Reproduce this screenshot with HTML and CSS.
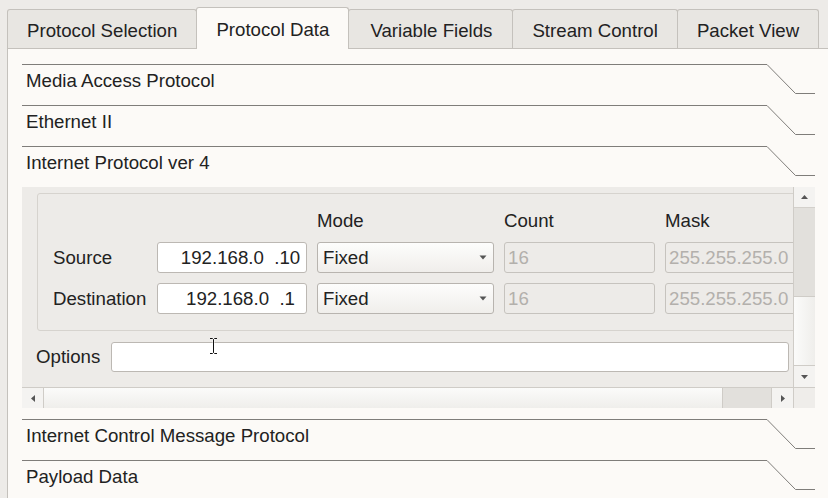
FILE: index.html
```html
<!DOCTYPE html>
<html>
<head>
<meta charset="utf-8">
<link rel="stylesheet" href="styles.css">
</head>
<body>
<div class="tabs">
  <div class="tab">Protocol Selection</div>
  <div class="tab active">Protocol Data</div>
  <div class="tab tab-wide">Variable Fields</div>
  <div class="tab">Stream Control</div>
  <div class="tab">Packet View</div>
</div>
<div class="panel">
  <div class="head">
    <div class="head-title">Media Access Protocol</div>
    <svg class="head-tail" width="48" height="41" viewBox="0 0 48 41"><polyline points="0,0.5 28.5,29.5 48,29.5" fill="none" stroke="#7f7d7a" stroke-width="1"/></svg>
  </div>
  <div class="head">
    <div class="head-title">Ethernet II</div>
    <svg class="head-tail" width="48" height="41" viewBox="0 0 48 41"><polyline points="0,0.5 28.5,29.5 48,29.5" fill="none" stroke="#7f7d7a" stroke-width="1"/></svg>
  </div>
  <div class="head">
    <div class="head-title">Internet Protocol ver 4</div>
    <svg class="head-tail" width="48" height="41" viewBox="0 0 48 41"><polyline points="0,0.5 28.5,29.5 48,29.5" fill="none" stroke="#7f7d7a" stroke-width="1"/></svg>
  </div>
  <div class="body">
    <div class="viewport">
      <div class="group">
        <div></div>
        <div></div>
        <div class="colhead">Mode</div>
        <div class="colhead">Count</div>
        <div class="colhead">Mask</div>

        <div class="label">Source</div>
        <div class="field ip">192.168.0  .10</div>
        <div class="field combo"><span>Fixed</span><svg width="8" height="5" viewBox="0 0 8 5"><polygon points="0.5,0.5 7.5,0.5 4,4.5" fill="#555"/></svg></div>
        <div class="field dis">16</div>
        <div class="field dis">255.255.255.0</div>

        <div class="label">Destination</div>
        <div class="field ip">192.168.0  .1</div>
        <div class="field combo"><span>Fixed</span><svg width="8" height="5" viewBox="0 0 8 5"><polygon points="0.5,0.5 7.5,0.5 4,4.5" fill="#555"/></svg></div>
        <div class="field dis">16</div>
        <div class="field dis">255.255.255.0</div>
      </div>
      <div class="opts">
        <div class="opts-label">Options</div>
        <div class="field opts-input"></div>
      </div>
    </div>
    <div class="vscroll">
      <div class="sb-btn sb-up"><svg width="7" height="4" viewBox="0 0 7 4"><polygon points="0,4 7,4 3.5,0" fill="#555"/></svg></div>
      <div class="sb-track"></div>
      <div class="sb-thumb-v"></div>
      <div class="sb-btn sb-down"><svg width="7" height="4" viewBox="0 0 7 4"><polygon points="0,0 7,0 3.5,4" fill="#555"/></svg></div>
    </div>
    <div class="hscroll">
      <div class="sb-btn sb-left"><svg width="4" height="7" viewBox="0 0 4 7"><polygon points="4,0 4,7 0,3.5" fill="#555"/></svg></div>
      <div class="sb-thumb-h"></div>
      <div class="sb-track-h"></div>
      <div class="sb-btn sb-right"><svg width="4" height="7" viewBox="0 0 4 7"><polygon points="0,0 0,7 4,3.5" fill="#555"/></svg></div>
    </div>
    <div class="corner"></div>
  </div>
  <div class="head">
    <div class="head-title">Internet Control Message Protocol</div>
    <svg class="head-tail" width="48" height="41" viewBox="0 0 48 41"><polyline points="0,0.5 28.5,29.5 48,29.5" fill="none" stroke="#7f7d7a" stroke-width="1"/></svg>
  </div>
  <div class="head">
    <div class="head-title">Payload Data</div>
    <svg class="head-tail" width="48" height="41" viewBox="0 0 48 41"><polyline points="0,0.5 28.5,29.5 48,29.5" fill="none" stroke="#7f7d7a" stroke-width="1"/></svg>
  </div>
</div>
<svg class="cursor" width="10" height="17" viewBox="0 0 10 17"><path d="M1 0.5h2.5l1 1 1-1H8M4.5 1.5v13M1 15.5h2.5l1-1 1 1H8" fill="none" stroke="#fff" stroke-width="2.2" opacity="0.7"/><path d="M1 0.5h2.5l1 1 1-1H8M4.5 1.5v13M1 15.5h2.5l1-1 1 1H8" fill="none" stroke="#111" stroke-width="1"/></svg>
</body>
</html>
```

FILE: styles.css
```css
html, body {
  margin: 0;
  padding: 0;
}

body {
  background: #edebe8;
  font-family: "Liberation Sans", Arial, sans-serif;
  font-size: 14pt;
  color: #222;
  height: 498px;
  overflow: hidden;
  position: relative;
}

.tabs {
  display: flex;
  align-items: flex-end;
  height: 41px;
  padding: 7px 0 0 7px;
}

.tab {
  box-sizing: border-box;
  height: 39px;
  padding: 4px 19px 0;
  border: 1px solid #c4c1bc;
  border-bottom: 0;
  border-radius: 3px 3px 0 0;
  background: #e8e6e2;
  display: flex;
  align-items: center;
  white-space: nowrap;
}

.tab + .tab {
  margin-left: -1px;
}

.tab.active {
  height: 42px;
  margin-bottom: -1px;
  padding-top: 3px;
  background: #fcfaf7;
  position: relative;
  z-index: 1;
}

.tab-wide {
  padding: 4px 20px 0 21px;
}

.panel {
  box-sizing: border-box;
  margin-left: 7px;
  border-left: 1px solid #c4c1bc;
  border-top: 1px solid #c4c1bc;
  background: #fcfaf7;
  padding: 15px 13px 0 14px;
  height: 450px;
  overflow: hidden;
}

.head {
  display: grid;
  grid-template-columns: 1fr 48px;
  height: 41px;
}

.head-title {
  border-top: 1px solid #7f7d7a;
  padding: 5px 0 0 4px;
  white-space: nowrap;
}

.head-tail {
  display: block;
}

.body {
  display: grid;
  grid-template-columns: 1fr 22px;
  grid-template-rows: 200px 21px;
  background: #edebe8;
  margin-bottom: 11px;
}

.viewport {
  grid-column: 1;
  grid-row: 1;
  overflow: hidden;
  padding-top: 6px;
}

.group {
  width: 795px;
  box-sizing: border-box;
  margin-left: 15px;
  border: 1px solid #d6d3ce;
  border-radius: 3px;
  padding: 16px 15px;
  display: grid;
  grid-template-columns: 94px 150px 177px 151px 151px;
  grid-template-rows: 22px 31px 31px;
  gap: 10px;
  align-items: center;
}

.label, .colhead {
  white-space: nowrap;
}

.field {
  box-sizing: border-box;
  height: 31px;
  border: 1px solid #bcb8b3;
  border-radius: 3px;
  background: #fff;
  display: flex;
  align-items: center;
  white-space: pre;
  overflow: hidden;
}

.ip {
  justify-content: center;
  padding: 0 0 0 17px;
}

.combo {
  background: linear-gradient(#fdfdfc, #f0eeeb);
  padding: 0 6px 0 5px;
  justify-content: space-between;
  border-color: #b8b4af;
}

.dis {
  background: #edebe8;
  color: #b3b0ac;
  padding-left: 3px;
  border-color: #c6c3be;
}

.opts {
  display: flex;
  align-items: center;
  gap: 10px;
  margin: 11px 4px 0 14px;
}

.opts-label {
  width: 65px;
}

.opts-input {
  flex: 1;
  height: 30px;
}

.vscroll {
  grid-column: 2;
  grid-row: 1;
  display: flex;
  flex-direction: column;
  border-left: 1px solid #cfccc7;
  background: #e2e0dc;
}

.sb-btn {
  display: flex;
  align-items: center;
  justify-content: center;
  background: #f4f3f1;
  flex: none;
}

.sb-up {
  height: 20px;
  border-bottom: 1px solid #d3d0cb;
}

.sb-track {
  flex: 1;
}

.sb-thumb-v {
  height: 68px;
  border-top: 1px solid #cfccc7;
  background: linear-gradient(to right, #fbfbfa, #efeeeb);
}

.sb-down {
  height: 21px;
  border-top: 1px solid #cfccc7;
}

.hscroll {
  grid-column: 1;
  grid-row: 2;
  display: flex;
  border-top: 1px solid #cfccc7;
  background: #e2e0dc;
}

.sb-left {
  width: 21px;
  border-right: 1px solid #cfccc7;
}

.sb-thumb-h {
  flex: 1;
  background: linear-gradient(#fbfbfa, #efeeeb);
  border-right: 1px solid #cfccc7;
}

.sb-track-h {
  width: 48px;
  flex: none;
}

.sb-right {
  width: 21px;
  border-left: 1px solid #cfccc7;
}

.corner {
  grid-column: 2;
  grid-row: 2;
  background: #efedea;
  border-top: 1px solid #cfccc7;
  border-left: 1px solid #cfccc7;
}

.cursor {
  position: absolute;
  left: 209px;
  top: 338px;
}
```
